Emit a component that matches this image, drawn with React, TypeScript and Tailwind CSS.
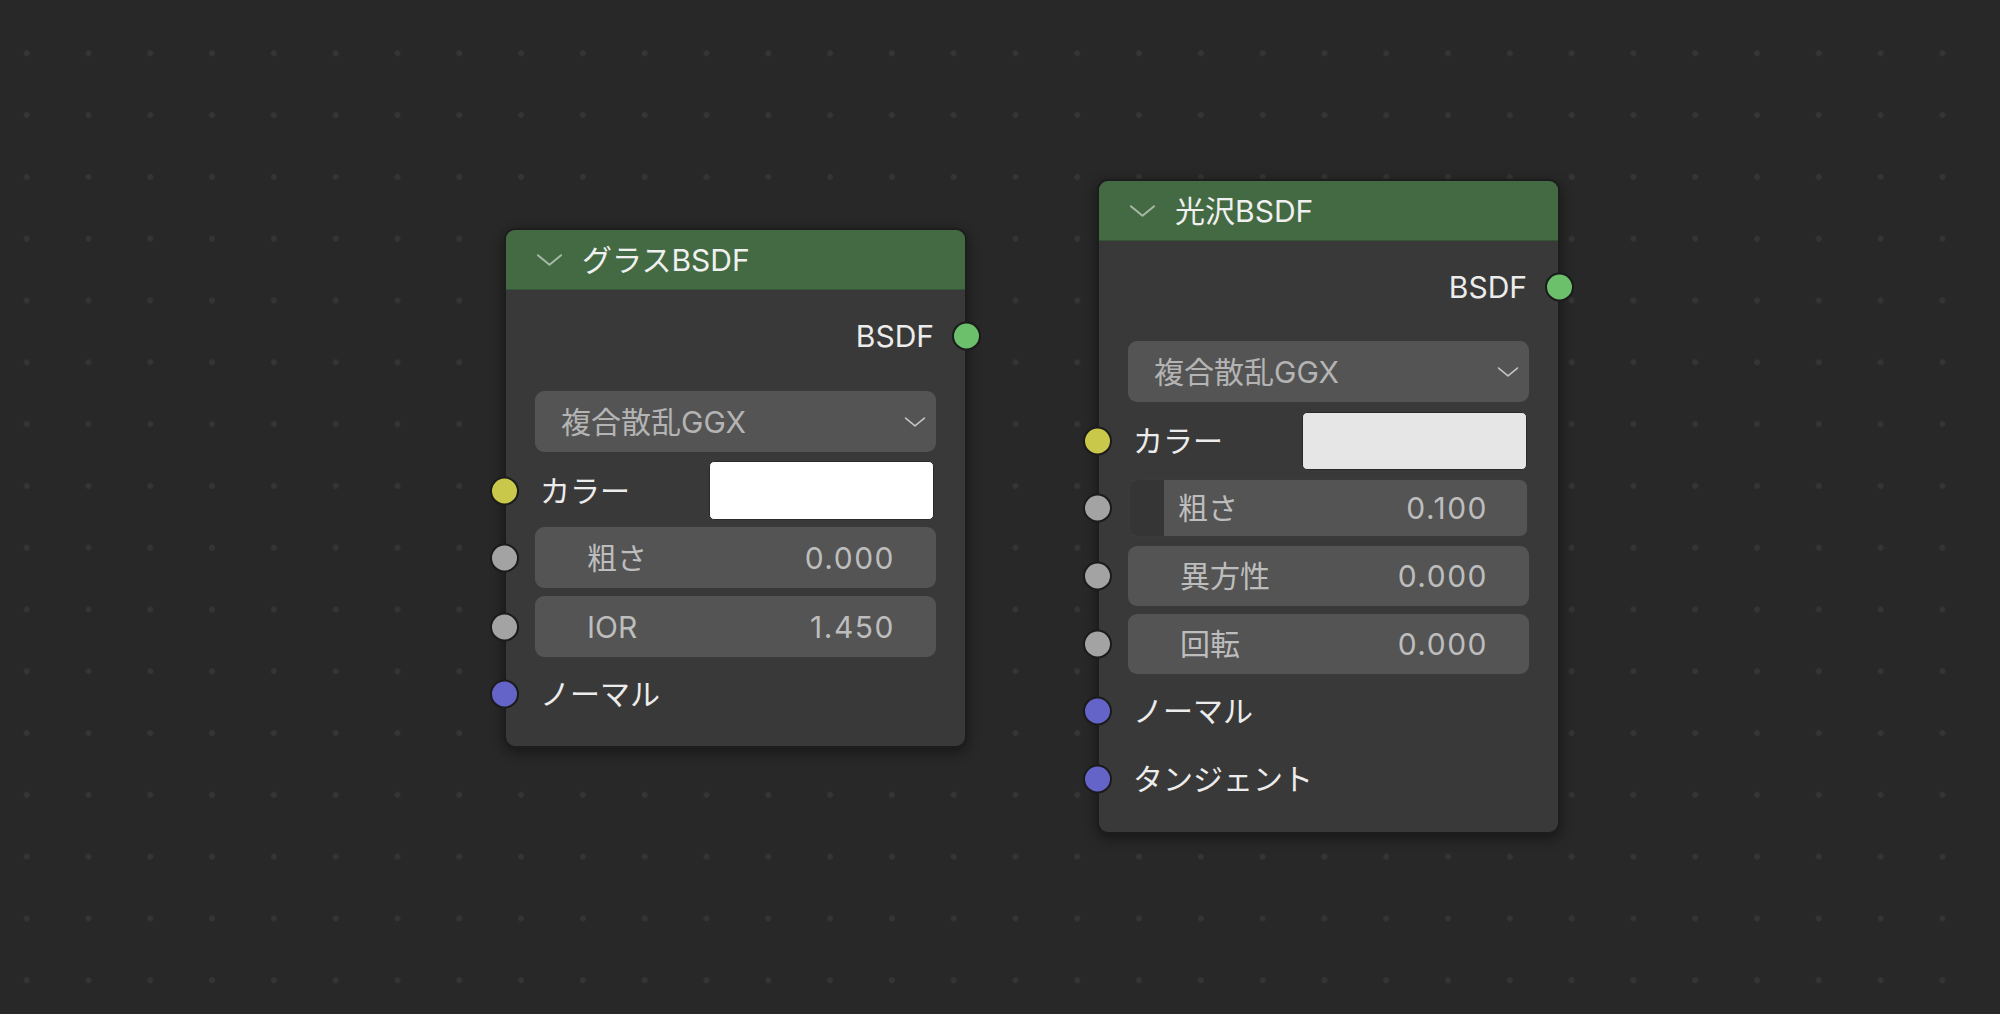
import type { ReactNode } from 'react'

const FONT = 'font-["Inter","Noto_Sans_CJK_JP",sans-serif]'

const SOCKET_COLORS: Record<string, string> = {
  green: 'bg-[#6cc06c]',
  yellow: 'bg-[#c9c84a]',
  grey: 'bg-[#a3a3a3]',
  purple: 'bg-[#6464c8]',
}

function Socket({ color, side }: { color: string; side: 'left' | 'right' }) {
  return (
    <span
      className={`absolute top-1/2 -translate-y-1/2 w-[29px] h-[29px] rounded-full border-[2.5px] border-[#1b1b1b] ${SOCKET_COLORS[color]} ${
        side === 'left' ? 'left-[-16px]' : 'right-[-16px]'
      }`}
    />
  )
}

function Chevron({ className }: { className: string }) {
  return (
    <svg viewBox="0 0 28 14" className={className} fill="none" stroke="currentColor" strokeWidth="2" strokeLinecap="round" strokeLinejoin="round">
      <path d="M2 2 L14 12 L26 2" />
    </svg>
  )
}

function OutputRow({ label, mt }: { label: string; mt: string }) {
  return (
    <div className={`relative h-[54px] flex items-center justify-end pr-[31px] ${mt}`}>
      <span className="text-[30px] leading-none text-[#ececec]">{label}</span>
      <Socket color="green" side="right" />
    </div>
  )
}

function Dropdown({ mt }: { mt: string }) {
  return (
    <div className={`mx-[29px] h-[61px] rounded-[9px] bg-[#545454] flex items-center justify-between pl-[26px] pr-[10px] ${mt}`}>
      <span className="text-[30px] leading-none text-[#b4b4b4]">複合散乱GGX</span>
      <Chevron className="w-[22px] h-[12px] text-[#c4c4c4]" />
    </div>
  )
}

function ColorRow({ swatch, mt, h }: { swatch: string; mt: string; h: string }) {
  return (
    <div className={`relative flex items-center ${h} ${mt}`}>
      <Socket color="yellow" side="left" />
      <span className="ml-[34px] text-[30px] leading-none text-[#ececec]">カラー</span>
      <div className={`ml-auto mr-[31px] w-[225px] h-full rounded-[5px] border border-[#2a2a2a] ${swatch}`} />
    </div>
  )
}

function Field({ label, value, mt, h, fill }: { label: string; value: string; mt: string; h: string; fill?: boolean }) {
  return (
    <div className={`relative ${h} ${mt}`}>
      <Socket color="grey" side="left" />
      <div
        className={`mx-[29px] h-full rounded-[9px] bg-[#545454] flex items-center overflow-hidden ${
          fill ? 'border-2 border-[#3a3a3a]' : ''
        }`}
      >
        {fill && <div className="h-full w-[34px] bg-[#353535] shrink-0" />}
        <span className={`text-[30px] leading-none text-[#bdbdbd] ${fill ? 'ml-[14px]' : 'ml-[52px]'}`}>{label}</span>
        <span className={`ml-auto text-[30px] leading-none tracking-[1.5px] text-[#bdbdbd] ${fill ? 'mr-[39px]' : 'mr-[41px]'}`}>
          {value}
        </span>
      </div>
    </div>
  )
}

function InputRow({ label, mt }: { label: string; mt: string }) {
  return (
    <div className={`relative h-[54px] flex items-center ${mt}`}>
      <Socket color="purple" side="left" />
      <span className="ml-[34px] text-[30px] leading-none text-[#ececec]">{label}</span>
    </div>
  )
}

function Node({ title, children, className }: { title: string; children: ReactNode; className: string }) {
  return (
    <div
      className={`absolute w-[463px] rounded-[11px] border-2 border-[#1d1d1d] bg-[#393939] shadow-[0_4px_14px_rgba(0,0,0,0.45)] ${className}`}
    >
      <div className="h-[60px] rounded-t-[9px] bg-[#436a42] flex items-center pl-[30px] border-b border-[#355634]">
        <Chevron className="w-[27px] h-[14px] text-[#a9b9a8]" />
        <span className="ml-[19px] text-[30px] leading-none text-[#f0f0f0]">{title}</span>
      </div>
      {children}
    </div>
  )
}

export default function App() {
  return (
    <div
      className={`relative w-[2000px] h-[1014px] overflow-hidden bg-[#282828] bg-[radial-gradient(circle,#353535_2.6px,transparent_3.2px)] bg-[size:61.8px_61.8px] bg-[position:-4.2px_22.4px] ${FONT}`}
    >
      <Node title="グラスBSDF" className="left-[504px] top-[228px] pb-[25px]">
        <OutputRow label="BSDF" mt="mt-[19px]" />
        <Dropdown mt="mt-[28px]" />
        <ColorRow swatch="bg-white" mt="mt-[9px]" h="h-[59px]" />
        <Field label="粗さ" value="0.000" mt="mt-[7px]" h="h-[61px]" />
        <Field label="IOR" value="1.450" mt="mt-[8px]" h="h-[61px]" />
        <InputRow label="ノーマル" mt="mt-[10px]" />
      </Node>

      <Node title="光沢BSDF" className="left-[1097px] top-[179px] pb-[26px]">
        <OutputRow label="BSDF" mt="mt-[19px]" />
        <Dropdown mt="mt-[27px]" />
        <ColorRow swatch="bg-[#e6e6e6]" mt="mt-[10px]" h="h-[58px]" />
        <Field label="粗さ" value="0.100" mt="mt-[8px]" h="h-[60px]" fill />
        <Field label="異方性" value="0.000" mt="mt-[8px]" h="h-[60px]" />
        <Field label="回転" value="0.000" mt="mt-[8px]" h="h-[60px]" />
        <InputRow label="ノーマル" mt="mt-[10px]" />
        <InputRow label="タンジェント" mt="mt-[14px]" />
      </Node>
    </div>
  )
}
